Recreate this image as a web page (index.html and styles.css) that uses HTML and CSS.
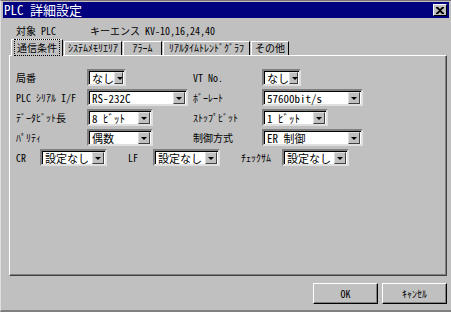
FILE: index.html
```html
<!DOCTYPE html>
<html lang="ja">

<head>
  <meta charset="UTF-8">
  <title>PLC 詳細設定</title>
  <link rel="stylesheet" href="styles.css">
</head>

<body>
  <div class="window">
    <div class="titlebar">
      <span class="title">PLC 詳細設定</span>
      <button class="close-button">
        <svg width="8" height="7" viewBox="0 0 8 7">
          <path d="M0 0h2l2 2 2-2h2v1l-3 2.5 3 2.5v1h-2l-2-2-2 2h-2v-1l3-2.5-3-2.5z" fill="#000" />
        </svg>
      </button>
    </div>

    <div class="target">
      <span class="target-label">対象 PLC</span>
      <span class="target-maker">キーエンス</span>
      <span class="target-model">KV-10,16,24,40</span>
    </div>

    <div class="tabs">
      <div class="tab active tab-comm"><span class="focus">通信条件</span></div>
      <div class="tab tab-memory">ｼｽﾃﾑﾒﾓﾘｴﾘｱ</div>
      <div class="tab tab-alarm">ｱﾗｰﾑ</div>
      <div class="tab tab-trend">ﾘｱﾙﾀｲﾑﾄﾚﾝﾄﾞｸﾞﾗﾌ</div>
      <div class="tab tab-other">その他</div>
    </div>

    <div class="panel">
      <div class="form-grid">
        <span class="label">局番</span>
        <div class="combo w-short"><span class="value">なし</span><span class="arrow"></span></div>
        <span class="label">VT No.</span>
        <div class="combo w-short"><span class="value">なし</span><span class="arrow"></span></div>

        <span class="label">PLC ｼﾘｱﾙ I/F</span>
        <div class="combo w-long"><span class="value">RS-232C</span><span class="arrow"></span></div>
        <span class="label">ﾎﾞｰﾚｰﾄ</span>
        <div class="combo w-long"><span class="value">57600bit/s</span><span class="arrow"></span></div>

        <span class="label">ﾃﾞｰﾀﾋﾞｯﾄ長</span>
        <div class="combo w-mid"><span class="value">8 ﾋﾞｯﾄ</span><span class="arrow"></span></div>
        <span class="label">ｽﾄｯﾌﾟﾋﾞｯﾄ</span>
        <div class="combo w-mid"><span class="value">1 ﾋﾞｯﾄ</span><span class="arrow"></span></div>

        <span class="label">ﾊﾟﾘﾃｨ</span>
        <div class="combo w-mid"><span class="value">偶数</span><span class="arrow"></span></div>
        <span class="label">制御方式</span>
        <div class="combo w-long"><span class="value">ER 制御</span><span class="arrow"></span></div>
      </div>

      <div class="form-row">
        <span class="label-cr">CR</span>
        <div class="combo w-line"><span class="value">設定なし</span><span class="arrow"></span></div>
        <span class="label-lf">LF</span>
        <div class="combo w-line"><span class="value">設定なし</span><span class="arrow"></span></div>
        <span class="label-sum">ﾁｪｯｸｻﾑ</span>
        <div class="combo w-line"><span class="value">設定なし</span><span class="arrow"></span></div>
      </div>
    </div>

    <div class="buttons">
      <button class="button">OK</button>
      <button class="button">ｷｬﾝｾﾙ</button>
    </div>
  </div>
</body>

</html>
```

FILE: styles.css
```css
body {
  margin: 0;
  padding: 0;
  background-color: #c0c0c0;
  font-family: "Noto Sans Mono CJK JP", "Noto Sans CJK JP", monospace;
  font-size: 10px;
  line-height: 12px;
  color: #000;
}

.window {
  width: 451px;
  height: 312px;
  box-sizing: border-box;
  padding: 1px 2px 0 2px;
  background-color: #c0c0c0;
  border-top: 1px solid #7c6f75;
  border-left: 1px solid #dfdfdf;
  border-bottom: 2px solid #808080;
  overflow: hidden;
}

.titlebar {
  height: 16px;
  background-color: #00007e;
  color: #fff;
  display: flex;
  align-items: center;
  justify-content: space-between;
  padding: 0 2px 0 1px;
}

.title {
  font-size: 13px;
  line-height: 16px;
}

.close-button {
  width: 14px;
  height: 12px;
  padding: 0;
  background-color: #c0c0c0;
  border: 1px solid;
  border-color: #fff #000 #000 #fff;
  display: flex;
  align-items: center;
  justify-content: center;
}

.target {
  display: flex;
  height: 12px;
  margin-top: 7px;
  padding-left: 13px;
}

.target-label {
  width: 74px;
}

.target-maker {
  width: 55px;
}

.tabs {
  display: flex;
  align-items: flex-end;
  height: 16px;
  margin-top: 2px;
  padding-left: 8px;
}

.tab {
  height: 14px;
  box-sizing: border-box;
  line-height: 12px;
  text-align: center;
  border: 1px solid;
  border-color: #fff #000 transparent #fff;
  border-bottom: none;
  white-space: nowrap;
  margin-right: 1px;
}

.tab.active {
  height: 17px;
  line-height: 15px;
  position: relative;
  z-index: 1;
  background-color: #c0c0c0;
  margin-bottom: -1px;
}

.tab-comm {
  width: 52px;
}

.tab-memory {
  width: 58px;
}

.tab-alarm {
  width: 39px;
}

.tab-trend {
  width: 87px;
}

.tab-other {
  width: 38px;
}

.focus {
  outline: 1px dotted #000;
  padding: 0 2px;
}

.panel {
  height: 221px;
  box-sizing: border-box;
  margin: 0 2px 0 6px;
  border: 1px solid;
  border-color: #fff #404040 #404040 #fff;
  box-shadow: inset -1px -1px 0 #808080;
  padding: 13px 6px 0 6px;
}

.form-grid {
  display: grid;
  grid-template-columns: 71px 106px 69px auto;
  row-gap: 3px;
  align-items: center;
}

.form-row {
  display: flex;
  align-items: center;
  margin-top: 3px;
}

.label-cr {
  width: 24px;
}

.label-lf {
  margin-left: 21px;
  width: 25px;
}

.label-sum {
  margin-left: 21px;
  width: 41px;
}

.combo {
  height: 17px;
  box-sizing: border-box;
  background-color: #fff;
  border: 2px solid;
  border-color: #808080 #dfdfdf #dfdfdf #808080;
  box-shadow: inset 1px 1px 0 #000;
  display: flex;
  align-items: center;
  justify-content: space-between;
}

.w-short {
  width: 39px;
}

.w-long {
  width: 101px;
}

.w-mid {
  width: 66px;
}

.w-line {
  width: 67px;
}

.value {
  padding-left: 3px;
  white-space: nowrap;
  font-size: 11px;
}

.arrow {
  width: 12px;
  height: 12px;
  box-sizing: border-box;
  background-color: #c0c0c0;
  border: 1px solid;
  border-color: #dfdfdf #404040 #404040 #dfdfdf;
  margin-right: 1px;
  position: relative;
}

.arrow::after {
  content: "";
  position: absolute;
  left: 2px;
  top: 4px;
  border-left: 3px solid transparent;
  border-right: 3px solid transparent;
  border-top: 3px solid #000;
}

.buttons {
  display: flex;
  justify-content: flex-end;
  gap: 4px;
  margin-top: 7px;
  padding-right: 2px;
}

.button {
  width: 65px;
  height: 21px;
  background-color: #c0c0c0;
  border: 1px solid;
  border-color: #fff #000 #000 #fff;
  box-shadow: inset -1px -1px 0 #808080;
  font-family: "Noto Sans Mono CJK JP", "Noto Sans CJK JP", monospace;
  font-size: 10px;
  padding: 0;
}
```
